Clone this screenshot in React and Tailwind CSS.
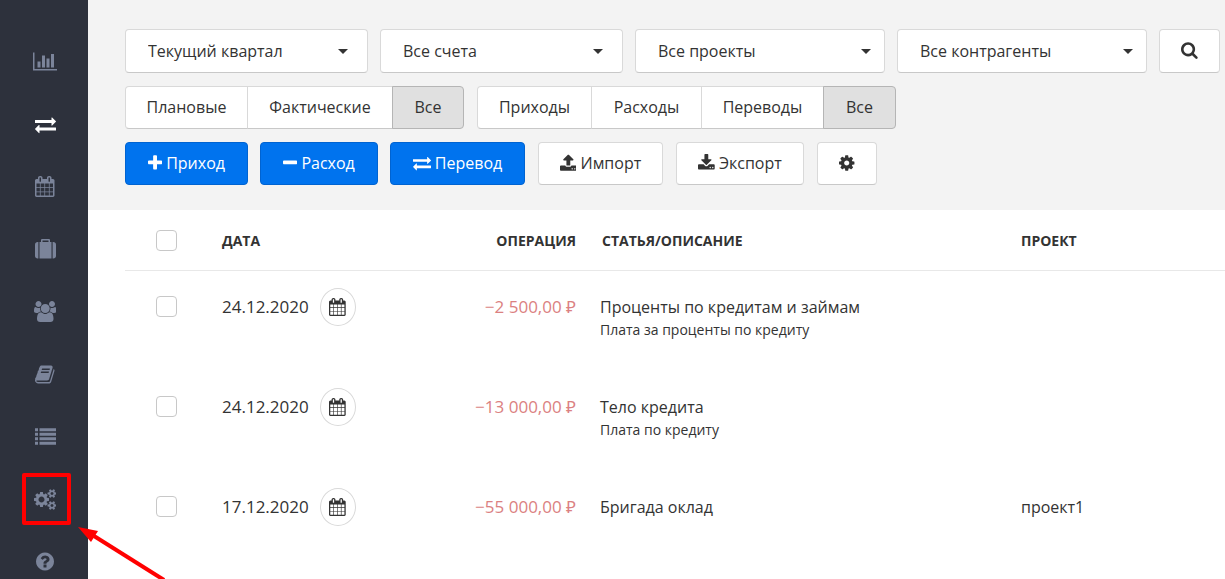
import { useState } from 'react';
import clsx from 'clsx';

// [viewBox, path]
const ICONS = {
  chart: ['0 0 2048 1792', 'M640 896v512h-256v-512h256zm384-512v1024h-256v-1024h256zm1024 1152v128h-2048v-1536h128v1408h1920zm-640-896v768h-256v-768h256zm384-384v1152h-256v-1152h256z'],
  exchange: ['0 0 1792 1792', 'M1792 1184v192q0 13-9.5 22.5t-22.5 9.5h-1376v192q0 13-9.5 22.5t-22.5 9.5q-12 0-24-10l-319-320q-9-9-9-22 0-14 9-23l320-320q9-9 23-9 13 0 22.5 9.5t9.5 22.5v192h1376q13 0 22.5 9.5t9.5 22.5zm0-544q0 14-9 23l-320 320q-9 9-23 9-13 0-22.5-9.5t-9.5-22.5v-192h-1376q-13 0-22.5-9.5t-9.5-22.5v-192q0-13 9.5-22.5t22.5-9.5h1376v-192q0-14 9-23t23-9q12 0 24 10l319 319q9 9 9 23z'],
  calendar: ['64 0 1664 1792', 'M192 1664h288v-288h-288v288zm352 0h320v-288h-320v288zm-352-352h288v-320h-288v320zm352 0h320v-320h-320v320zm-352-384h288v-288h-288v288zm736 736h320v-288h-320v288zm-384-736h320v-288h-320v288zm768 736h288v-288h-288v288zm-384-352h320v-320h-320v320zm-352-864v-288q0-13-9.5-22.5t-22.5-9.5h-64q-13 0-22.5 9.5t-9.5 22.5v288q0 13 9.5 22.5t22.5 9.5h64q13 0 22.5-9.5t9.5-22.5zm736 864h288v-320h-288v320zm-384-384h320v-288h-320v288zm384 0h288v-288h-288v288zm32-480v-288q0-13-9.5-22.5t-22.5-9.5h-64q-13 0-22.5 9.5t-9.5 22.5v288q0 13 9.5 22.5t22.5 9.5h64q13 0 22.5-9.5t9.5-22.5zm384-64v1280q0 52-38 90t-90 38h-1408q-52 0-90-38t-38-90v-1280q0-52 38-90t90-38h128v-96q0-66 47-113t113-47h64q66 0 113 47t47 113v96h384v-96q0-66 47-113t113-47h64q66 0 113 47t47 113v96h128q52 0 90 38t38 90z'],
  suitcase: ['0 0 1792 1792', 'M640 256h512v-128h-512v128zm-352 0v1408h-64q-92 0-158-66t-66-158v-960q0-92 66-158t158-66h64zm1120 0v1408h-1024v-1408h128v-160q0-40 28-68t68-28h576q40 0 68 28t28 68v160h128zm384 224v960q0 92-66 158t-158 66h-64v-1408h64q92 0 158 66t66 158z'],
  users: ['-64 0 1920 1792', 'M529 896q-162 5-265 128h-134q-82 0-138-40.5t-56-118.5q0-353 124-353 6 0 43.5 21t97.5 42.5 119 21.5q67 0 133-23-5 37-5 66 0 139 81 256zm1071 637q0 120-73 189.5t-194 69.5h-874q-121 0-194-69.5t-73-189.5q0-53 3.5-103.5t14-109 26.5-108.5 43-97.5 62-81 85.5-53.5 111.5-20q10 0 43 21.5t73 48 107 48 135 21.5 135-21.5 107-48 73-48 43-21.5q61 0 111.5 20t85.5 53.5 62 81 43 97.5 26.5 108.5 14 109 3.5 103.5zm-1024-1277q0 106-75 181t-181 75-181-75-75-181 75-181 181-75 181 75 75 181zm704 384q0 159-112.5 271.5t-271.5 112.5-271.5-112.5-112.5-271.5 112.5-271.5 271.5-112.5 271.5 112.5 112.5 271.5zm576 225q0 78-56 118.5t-138 40.5h-134q-103-123-265-128 81-117 81-256 0-29-5-66 66 23 133 23 59 0 119-21.5t97.5-42.5 43.5-21q124 0 124 353zm-128-609q0 106-75 181t-181 75-181-75-75-181 75-181 181-75 181 75 75 181z'],
  book: ['64 0 1664 1792', 'M1703 478q40 57 18 129l-275 906q-19 64-76.5 107.5t-122.5 43.5h-923q-77 0-148.5-53.5t-99.5-131.5q-24-67-2-127 0-4 3-27t4-37q1-8-3-21.5t-3-19.5q2-11 8-21t16.5-23.5 16.5-23.5q23-38 45-91.5t30-91.5q3-10 .5-30t-.5-28q3-11 17-28t17-23q21-36 42-92t25-90q1-9-2.5-32t.5-28q4-13 22-30.5t22-22.5q19-26 42.5-84.5t27.5-96.5q1-8-3-25.5t-2-26.5q2-8 9-18t18-23 17-21q8-12 16.5-30.5t15-35 16-36 19.5-32 26.5-23.5 36-11.5 47.5 5.5l-1 3q38-9 51-9h761q74 0 114 56t18 130l-274 906q-36 119-71.5 153.5t-128.5 34.5h-869q-27 0-38 15-11 16-1 43 24 70 144 70h923q29 0 56-15.5t35-41.5l300-987q7-22 5-57 38 15 59 43zm-1064 2q-4 13 2 22.5t20 9.5h608q13 0 25.5-9.5t16.5-22.5l21-64q4-13-2-22.5t-20-9.5h-608q-13 0-25.5 9.5t-16.5 22.5zm-83 256q-4 13 2 22.5t20 9.5h608q13 0 25.5-9.5t16.5-22.5l21-64q4-13-2-22.5t-20-9.5h-608q-13 0-25.5 9.5t-16.5 22.5z'],
  list: ['0 0 1792 1792', 'M0 192h256v256h-256zM384 192h1408v256h-1408zM0 576h256v256h-256zM384 576h1408v256h-1408zM0 960h256v256h-256zM384 960h1408v256h-1408zM0 1344h256v256h-256zM384 1344h1408v256h-1408z'],
  cogs: ['0 0 1920 1792', 'M896 896q0-106-75-181t-181-75-181 75-75 181 75 181 181 75 181-75 75-181zm768 512q0-52-38-90t-90-38-90 38-38 90q0 53 37.5 90.5t90.5 37.5 90.5-37.5 37.5-90.5zm0-1024q0-52-38-90t-90-38-90 38-38 90q0 53 37.5 90.5t90.5 37.5 90.5-37.5 37.5-90.5zm-384 421v185q0 10-7 19.5t-16 10.5l-155 24q-11 35-32 76 34 48 90 115 7 11 7 20 0 12-7 19-23 30-82.5 89.5t-78.5 59.5q-11 0-21-7l-115-90q-37 19-77 31-11 108-23 155-7 24-30 24h-186q-11 0-20-7.5t-10-17.5l-23-153q-34-10-75-31l-118 89q-7 7-20 7-11 0-21-8-144-133-144-160 0-9 7-19 10-14 41-53t47-61q-23-44-35-82l-152-24q-10-1-17-9.5t-7-19.5v-185q0-10 7-19.5t16-10.5l155-24q11-35 32-76-34-48-90-115-7-11-7-20 0-12 7-20 22-30 82-89t79-59q11 0 21 7l115 90q34-18 77-32 11-108 23-154 7-24 30-24h186q11 0 20 7.5t10 17.5l23 153q34 10 75 31l118-89q8-7 20-7 11 0 21 8 144 133 144 160 0 8-7 19-12 16-42 54t-45 60q23 48 34 82l152 23q10 2 17 10.5t7 19.5zm640 533v140q0 16-149 31-12 27-30 52 51 113 51 138 0 4-4 7-122 71-124 71-8 0-46-47t-52-68q-20 2-30 2t-30-2q-14 21-52 68t-46 47q-2 0-124-71-4-3-4-7 0-25 51-138-18-25-30-52-149-15-149-31v-140q0-16 149-31 13-29 30-52-51-113-51-138 0-4 4-7 4-2 35-20t59-34 30-16q8 0 46 46.5t52 67.5q20-2 30-2t30 2q51-71 92-112l6-2q4 0 124 70 4 3 4 7 0 25-51 138 17 23 30 52 149 15 149 31zm0-1024v140q0 16-149 31-12 27-30 52 51 113 51 138 0 4-4 7-122 71-124 71-8 0-46-47t-52-68q-20 2-30 2t-30-2q-14 21-52 68t-46 47q-2 0-124-71-4-3-4-7 0-25 51-138-18-25-30-52-149-15-149-31v-140q0-16 149-31 13-29 30-52-51-113-51-138 0-4 4-7 4-2 35-20t59-34 30-16q8 0 46 46.5t52 67.5q20-2 30-2t30 2q51-71 92-112l6-2q4 0 124 70 4 3 4 7 0 25-51 138 17 23 30 52 149 15 149 31z'],
  question: ['128 0 1536 1792', 'M1024 1376v-192q0-14-9-23t-23-9h-192q-14 0-23 9t-9 23v192q0 14 9 23t23 9h192q14 0 23-9t9-23zm256-672q0-88-55.5-163t-138.5-116-170-41q-243 0-371 213-15 24 8 42l132 100q7 6 19 6 16 0 25-12 53-68 86-92 34-24 86-24 48 0 85.5 26t37.5 59q0 38-20 61t-68 45q-63 28-115.5 86.5t-52.5 125.5v36q0 14 9 23t23 9h192q14 0 23-9t9-23q0-19 21.5-49.5t54.5-49.5q32-18 49-28.5t46-35 44.5-48 28-60.5 12.5-81zm384 192q0 209-103 385.5t-279.5 279.5-385.5 103-385.5-103-279.5-279.5-103-385.5 103-385.5 279.5-279.5 385.5-103 385.5 103 279.5 279.5 103 385.5z'],
  plus: ['192 0 1408 1792', 'M1600 736v192q0 40-28 68t-68 28h-416v416q0 40-28 68t-68 28h-192q-40 0-68-28t-28-68v-416h-416q-40 0-68-28t-28-68v-192q0-40 28-68t68-28h416v-416q0-40 28-68t68-28h192q40 0 68 28t28 68v416h416q40 0 68 28t28 68z'],
  minus: ['192 0 1408 1792', 'M1600 736v192q0 40-28 68t-68 28h-1216q-40 0-68-28t-28-68v-192q0-40 28-68t68-28h1216q40 0 68 28t28 68z'],
  upload: ['64 0 1664 1792', 'M1344 1472q0-26-19-45t-45-19-45 19-19 45 19 45 45 19 45-19 19-45zm256 0q0-26-19-45t-45-19-45 19-19 45 19 45 45 19 45-19 19-45zm128-224v320q0 40-28 68t-68 28h-1472q-40 0-68-28t-28-68v-320q0-40 28-68t68-28h427q21 56 70.5 92t110.5 36h256q61 0 110.5-36t70.5-92h427q40 0 68 28t28 68zm-325-648q-17 40-59 40h-256v448q0 26-19 45t-45 19h-256q-26 0-45-19t-19-45v-448h-256q-42 0-59-40-17-39 14-69l448-448q18-19 45-19t45 19l448 448q31 30 14 69z'],
  download: ['64 0 1664 1792', 'M1344 1344q0-26-19-45t-45-19-45 19-19 45 19 45 45 19 45-19 19-45zm256 0q0-26-19-45t-45-19-45 19-19 45 19 45 45 19 45-19 19-45zm128-224v320q0 40-28 68t-68 28h-1472q-40 0-68-28t-28-68v-320q0-40 28-68t68-28h465l135 136q58 56 136 56t136-56l136-136h464q40 0 68 28t28 68zm-325-569q17 41-14 70l-448 448q-18 19-45 19t-45-19l-448-448q-31-29-14-70 17-39 59-39h256v-448q0-26 19-45t45-19h256q26 0 45 19t19 45v448h256q42 0 59 39z'],
  cog: ['128 0 1536 1792', 'M1152 896q0-106-75-181t-181-75-181 75-75 181 75 181 181 75 181-75 75-181zm512-109v222q0 12-8 23t-20 13l-185 28q-19 54-39 91 35 50 107 138 10 12 10 25t-9 23q-27 37-99 108t-94 71q-12 0-26-9l-138-108q-44 23-91 38-16 136-29 186-7 28-36 28h-222q-14 0-24.5-8.5t-11.5-21.5l-28-184q-49-16-90-37l-141 107q-10 9-25 9-14 0-25-11-126-114-165-168-7-10-7-23 0-12 8-23 15-21 51-66.5t54-70.5q-27-50-41-99l-183-27q-13-2-21-12.5t-8-23.5v-222q0-12 8-23t19-13l186-28q14-46 39-92-40-57-107-138-10-12-10-24 0-10 9-23 26-36 98.5-107.5t94.5-71.5q13 0 26 10l138 107q44-23 91-38 16-136 29-186 7-28 36-28h222q14 0 24.5 8.5t11.5 21.5l28 184q49 16 90 37l142-107q9-9 24-9 13 0 25 10 129 119 165 170 7 8 7 22 0 12-8 23-15 21-51 66.5t-54 70.5q26 50 41 98l183 28q13 2 21 12.5t8 23.5z'],
  search: ['64 0 1664 1792', 'M1216 832q0-185-131.5-316.5t-316.5-131.5-316.5 131.5-131.5 316.5 131.5 316.5 316.5 131.5 316.5-131.5 131.5-316.5zm512 832q0 52-38 90t-90 38q-54 0-90-38l-343-342q-179 124-399 124-143 0-273.5-55.5t-225-150-150-225-55.5-273.5 55.5-273.5 150-225 225-150 273.5-55.5 273.5 55.5 225 150 150 225 55.5 273.5q0 220-124 399l343 343q37 37 37 90z'],
};

function Icon({ name, className }) {
  const [viewBox, d] = ICONS[name];
  return (
    <svg viewBox={viewBox} className={clsx('w-auto shrink-0 fill-current', className)} aria-hidden="true">
      <path d={d} />
    </svg>
  );
}

const NAV = [
  { icon: 'chart', label: 'Отчёты' },
  { icon: 'exchange', label: 'Операции', active: true },
  { icon: 'calendar', label: 'Календарь' },
  { icon: 'suitcase', label: 'Проекты' },
  { icon: 'users', label: 'Контрагенты' },
  { icon: 'book', label: 'Справочник' },
  { icon: 'list', label: 'Статьи' },
  { icon: 'cogs', label: 'Настройки', marked: true },
  { icon: 'question', label: 'Помощь' },
];

const FILTERS = [
  { label: 'Период', value: 'Текущий квартал', size: 'basis-[243px]', caret: 'right-5' },
  { label: 'Счета', value: 'Все счета', size: 'basis-[243px]', caret: 'right-5' },
  { label: 'Проекты', value: 'Все проекты', size: 'basis-[250px]', caret: 'right-3.5' },
  { label: 'Контрагенты', value: 'Все контрагенты', size: 'basis-[250px]', caret: 'right-3.5' },
];

const STATUS_TABS = [
  { label: 'Плановые', size: 'w-[123px]' },
  { label: 'Фактические', size: 'w-[146px]' },
  { label: 'Все', size: 'w-[72px]' },
];

const TYPE_TABS = [
  { label: 'Приходы', size: 'w-[115px]' },
  { label: 'Расходы', size: 'w-[111px]' },
  { label: 'Переводы', size: 'w-[123px]' },
  { label: 'Все', size: 'w-[73px]' },
];

const ROWS = [
  { date: '24.12.2020', amount: '−2 500,00 ₽', title: 'Проценты по кредитам и займам', note: 'Плата за проценты по кредиту' },
  { date: '24.12.2020', amount: '−13 000,00 ₽', title: 'Тело кредита', note: 'Плата по кредиту' },
  { date: '17.12.2020', amount: '−55 000,00 ₽', title: 'Бригада оклад', project: 'проект1' },
];

function Sidebar() {
  return (
    <nav className="w-[88px] shrink-0 bg-[#2d313c] pt-[30px]">
      {NAV.map((item) => (
        <a
          key={item.icon}
          href="#"
          aria-label={item.label}
          className={clsx(
            'relative flex h-[62px] items-center justify-center pl-0.5 odd:h-[63px]',
            item.active ? 'text-white' : 'text-[#7b849a]'
          )}
        >
          <Icon name={item.icon} className="h-[21px]" />
          {item.marked && <span className="absolute inset-y-[5px] right-[17px] left-[22px] rounded-xs border-4 border-[#ff0000]" />}
        </a>
      ))}
    </nav>
  );
}

function Filter({ label, value, size, caret }) {
  return (
    <div className={clsx('relative grow', size)}>
      <select
        aria-label={label}
        className="h-11 w-full appearance-none rounded border border-[#d9d9d9] border-b-[#c8c8c8] bg-white pr-10 pl-[22px]"
      >
        <option>{value}</option>
      </select>
      <svg viewBox="0 0 10 5" className={clsx('pointer-events-none absolute top-5 h-[5px] w-[10px] fill-[#333]', caret)} aria-hidden="true">
        <path d="M0 0h10L5 5z" />
      </svg>
    </div>
  );
}

function Tabs({ tabs }) {
  const [active, setActive] = useState('Все');
  return (
    <div className="flex">
      {tabs.map((tab) => (
        <button
          key={tab.label}
          type="button"
          aria-pressed={active === tab.label}
          onClick={() => setActive(tab.label)}
          className={clsx(
            '-mr-px h-[43px] border pb-0.5 first:rounded-l last:mr-0 last:rounded-r',
            tab.size,
            active === tab.label
              ? 'z-10 border-[#b5b5b5] bg-[#e0e0e0]'
              : 'border-[#d9d9d9] border-b-[#c8c8c8] bg-white'
          )}
        >
          {tab.label}
        </button>
      ))}
    </div>
  );
}

function Button({ icon, children, primary, className, ...rest }) {
  return (
    <button
      type="button"
      className={clsx(
        'flex items-center justify-center gap-1 rounded border pb-0.5',
        primary ? 'border-[#0063d1] bg-[#0073ee] text-white' : 'border-[#d9d9d9] border-b-[#c8c8c8] bg-white',
        className
      )}
      {...rest}
    >
      <Icon name={icon} className="h-[18px]" />
      {children}
    </button>
  );
}

function Checkbox({ label }) {
  return (
    <input
      type="checkbox"
      aria-label={label}
      className="block size-[21px] appearance-none rounded border border-[#c8c8c8] bg-white checked:bg-[#0073ee]"
    />
  );
}

function Toolbar() {
  return (
    <div className="flex flex-col gap-[13px] bg-[#f3f3f3] pt-[29px] pr-[5px] pb-[25px] pl-[37px]">
      <div className="flex gap-3">
        {FILTERS.map((filter) => (
          <Filter key={filter.label} {...filter} />
        ))}
        <Button icon="search" aria-label="Поиск" className="h-11 w-[61px]" />
      </div>
      <div className="flex gap-[13px]">
        <Tabs tabs={STATUS_TABS} />
        <Tabs tabs={TYPE_TABS} />
      </div>
      <div className="flex gap-[13px]">
        <div className="flex gap-3">
          <Button icon="plus" primary className="h-[43px] w-[123px]">Приход</Button>
          <Button icon="minus" primary className="h-[43px] w-[118px]">Расход</Button>
          <Button icon="exchange" primary className="h-[43px] w-[135px]">Перевод</Button>
        </div>
        <Button icon="upload" className="h-[43px] w-[125px]">Импорт</Button>
        <Button icon="download" className="h-[43px] w-[128px]">Экспорт</Button>
        <Button icon="cog" aria-label="Параметры" className="h-[43px] w-[60px]" />
      </div>
    </div>
  );
}

function Operations() {
  return (
    <div className="pl-[37px]">
      <table className="w-full table-fixed border-separate border-spacing-0 text-left">
        <thead>
          <tr className="h-[61px] text-sm uppercase *:border-b *:border-[#e8e8e8]">
            <th className="w-[97px] pl-[31px]">
              <Checkbox label="Выбрать все" />
            </th>
            <th className="w-[150px] pt-0.5">Дата</th>
            <th className="w-[204px] pt-0.5 text-right">Операция</th>
            <th className="w-[445px] pt-0.5 pl-[26px]">Статья/описание</th>
            <th className="pt-0.5">Проект</th>
          </tr>
        </thead>
        <tbody>
          {ROWS.map((row) => (
            <tr key={row.title} className="h-[100px] align-top">
              <td className="pt-[25px] pl-[31px]">
                <Checkbox label={row.title} />
              </td>
              <td className="pt-[17px] text-[17px]">
                <div className="flex items-center gap-[11px]">
                  {row.date}
                  <button
                    type="button"
                    aria-label="Изменить дату"
                    className="flex h-[38px] w-9 items-center justify-center rounded-[50%] border border-[#d9d9d9]"
                  >
                    <Icon name="calendar" className="h-[18px]" />
                  </button>
                </div>
              </td>
              <td className="pt-6 text-right text-[17px] leading-6 text-[#db8181]">{row.amount}</td>
              <td className="pt-6 pl-6">
                <div>{row.title}</div>
                {row.note && <div className="text-sm leading-[22px]">{row.note}</div>}
              </td>
              <td className="pt-6">{row.project}</td>
            </tr>
          ))}
        </tbody>
      </table>
    </div>
  );
}

export default function App() {
  return (
    <div className="relative flex h-screen overflow-hidden bg-white font-['Open_Sans','Noto_Sans',sans-serif] text-base text-[#333]">
      <Sidebar />
      <main className="min-w-0 grow">
        <Toolbar />
        <Operations />
      </main>
      {/* Pointer to the settings item */}
      <svg viewBox="0 0 90 54" className="pointer-events-none absolute top-[526px] left-[77px] h-[54px] w-[90px]" aria-hidden="true">
        <path d="M17 10L87 54" stroke="#ff0000" strokeWidth="4" />
        <path d="M1 1L21 5L14 16z" fill="#ff0000" />
      </svg>
    </div>
  );
}
